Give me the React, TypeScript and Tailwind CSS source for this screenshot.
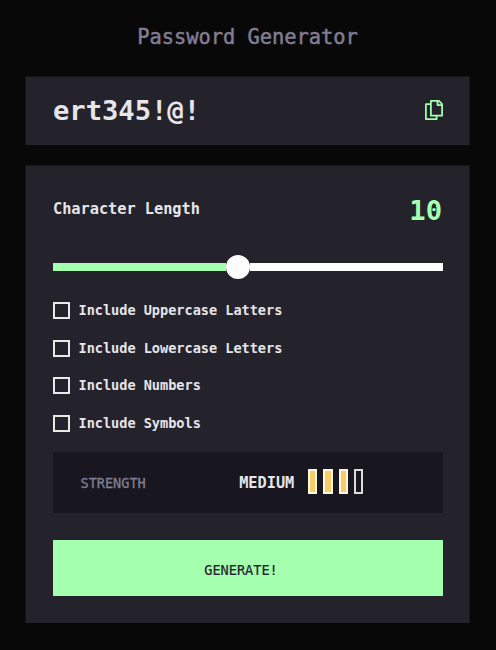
const options = [
  "Include Uppercase Latters",
  "Include Lowercase Letters",
  "Include Numbers",
  "Include Symbols",
];

const bars = [true, true, true, false];

function CopyIcon() {
  return (
    <svg
      viewBox="0 0 18 20"
      className="mb-[2px] h-5 w-[18px] text-[#a4ffaf]"
      fill="none"
      stroke="currentColor"
      strokeWidth="1.75"
      strokeLinejoin="round"
    >
      <path d="M5.7 4.2H.9v15h10.7v-3.3" />
      <path d="M5.9.8h8l3.2 3.2v11.7H5.9z" />
      <path d="M12.5.8v4.3h4.6" />
    </svg>
  );
}

export default function App() {
  return (
    <main className="h-[650px] w-[496px] overflow-hidden bg-[#080808] px-[25px] pt-[25px] font-['DejaVu_Sans_Mono',monospace] tracking-[-0.002em] text-[#e6e5ea]">
      <h1 className="pr-px text-center text-[20.4px] leading-6 text-[#817d92] [-webkit-text-stroke:0.5px_#817d92]">
        Password Generator
      </h1>

      <section className="mt-[27px] flex h-[69px] w-[445px] items-center justify-between border-x border-t border-[#151518] bg-[#24232c] pr-[26.5px] pl-[27px]">
        <span className="text-[27.2px] leading-9 font-bold">ert345!@!</span>
        <CopyIcon />
      </section>

      <section className="mt-5 h-[458px] w-[445px] border-x border-t border-[#151518] bg-[#24232c] pt-[27px] pr-[26px] pl-[27px]">
        <div className="flex h-9 items-start justify-between pr-px">
          <span className="pt-1 text-[15.3px] leading-6 font-bold">Character Length</span>
          <span className="text-[27.2px] leading-9 font-bold text-[#a4ffaf]">10</span>
        </div>

        <div className="mt-[26px] flex h-6 items-center">
          <div className="h-[7.5px] w-[173px] bg-[#a4ffaf]" />
          <div className="size-6 shrink-0 rounded-full bg-[#fdfdfd]" />
          <div className="h-[7.5px] flex-1 bg-white" />
        </div>

        <div className="mt-[12.7px] flex flex-col">
          {options.map((label) => (
            <label key={label} className="flex h-[37.6px] items-center gap-[8.5px]">
              <span className="size-[17px] border-2 border-[#e9e9ea]" />
              <span className="pb-px text-[13.6px] leading-5 font-bold">{label}</span>
            </label>
          ))}
        </div>

        <div className="mt-[10.3px] flex h-[61px] items-center bg-[#18171f] pl-[27.5px]">
          <span className="w-[158.7px] text-[13.6px] leading-5 text-[#817d92] [-webkit-text-stroke:0.3px_#817d92]">
            STRENGTH
          </span>
          <span className="text-[15.3px] leading-5 font-bold">MEDIUM</span>
          <div className="mb-[2px] ml-[13.6px] flex gap-[6px]">
            {bars.map((on, i) => (
              <span
                key={i}
                className={
                  on
                    ? "h-[25px] w-[9.4px] border-2 border-[#fff6e3] bg-[#f8cd65]"
                    : "h-[25px] w-[9.4px] border-2 border-[#dcdcdd]"
                }
              />
            ))}
          </div>
        </div>

        <button className="mt-[27px] flex h-14 w-full items-center justify-center bg-[#a4ffaf] pt-1 pr-[14px] text-[13.6px] leading-5 tracking-[-0.002em] text-[#24232c] [-webkit-text-stroke:0.2px_#24232c]">
          GENERATE!
        </button>
      </section>
    </main>
  );
}
